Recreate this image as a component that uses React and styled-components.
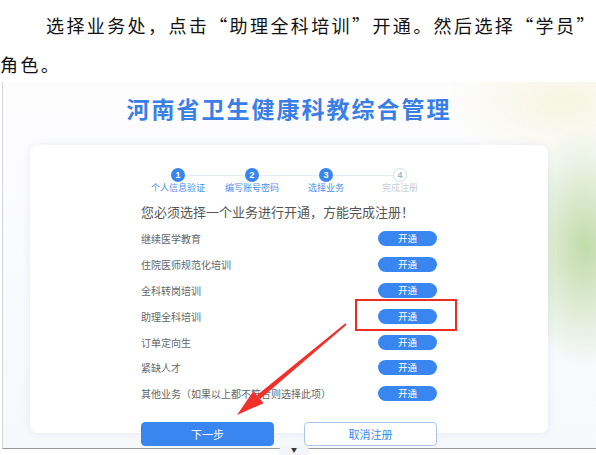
import React from "react";
import styled, { createGlobalStyle } from "styled-components";

const GlobalStyle = createGlobalStyle`
  html, body {
    margin: 0;
    padding: 0;
    background: #ffffff;
  }
  body {
    width: 596px;
    overflow: hidden;
    font-family: "Noto Sans CJK SC", "Noto Sans", sans-serif;
  }
`;

const Page = styled.div`
  width: 596px;
  height: 455px;
  overflow: hidden;
`;

const Paragraph = styled.p`
  margin: 0;
  padding-top: 6px;
  font-size: 18px;
  line-height: 39px;
  letter-spacing: 2.4px;
  color: #111;
  white-space: nowrap;
  text-indent: 46px;
`;

const Frame = styled.div`
  position: relative;
  box-sizing: border-box;
  margin-left: 2px;
  width: 594px;
  height: 367px;
  margin-top: -2px;
  padding-left: 27px;
  border-left: 1px solid #d6d6d6;
  border-bottom: 1.5px solid #9a9a9a;
  background:
    radial-gradient(ellipse 70px 120px at 582px 165px, rgba(190, 218, 165, 0.95), rgba(200, 224, 178, 0) 100%),
    radial-gradient(ellipse 120px 60px at 560px 20px, rgba(246, 244, 222, 0.9), rgba(246, 244, 222, 0) 100%),
    linear-gradient(#fdfdfe, #f6f8fc);
`;

const Column = styled.div`
  width: 518px;
  display: flex;
  flex-direction: column;
`;

const Title = styled.h1`
  margin: 11px 0 0;
  text-align: center;
  font-size: 23px;
  line-height: 30px;
  letter-spacing: 2px;
  font-weight: 700;
  color: #3a7fe6;
`;

const Card = styled.div`
  box-sizing: border-box;
  margin-top: 22px;
  height: 288px;
  padding: 23px 111px 0;
  background: #ffffff;
  border-radius: 8px;
  box-shadow: 0 0 8px rgba(40, 60, 120, 0.08);
`;

const Steps = styled.div`
  display: grid;
  grid-template-columns: repeat(4, 1fr);
  position: relative;
`;

const Step = styled.div`
  position: relative;
  display: flex;
  flex-direction: column;
  align-items: center;

  &::before {
    content: "";
    position: absolute;
    top: 7px;
    left: ${(p) => (p.$first ? "50%" : "0")};
    right: ${(p) => (p.$last ? "50%" : "0")};
    height: 1px;
    background: #e6ecf5;
  }
`;

const Dot = styled.div`
  position: relative;
  z-index: 1;
  box-sizing: border-box;
  width: 14px;
  height: 14px;
  border-radius: 50%;
  display: flex;
  align-items: center;
  justify-content: center;
  font-family: "Liberation Sans", sans-serif;
  font-size: 9px;
  font-weight: 700;
  background: ${(p) => (p.$done ? "#3a86f0" : "#ffffff")};
  color: ${(p) => (p.$done ? "#ffffff" : "#9fb3cf")};
  border: ${(p) => (p.$done ? "none" : "1px solid #cfdcee")};
`;

const StepLabel = styled.div`
  font-size: 9px;
  line-height: 11px;
  white-space: nowrap;
  color: ${(p) => (p.$done ? "#4b8ff0" : "#c9ced8")};
`;

const Heading = styled.div`
  margin-top: 10px;
  font-size: 13px;
  line-height: 18px;
  color: #555;
  white-space: nowrap;
`;

const List = styled.div`
  margin-top: 5px;
  display: flex;
  flex-direction: column;
`;

const Row = styled.div`
  height: 25.8px;
  display: flex;
  align-items: center;
  justify-content: space-between;
`;

const RowLabel = styled.span`
  font-size: 10px;
  color: #666;
  white-space: nowrap;
`;

const OpenWrap = styled.div`
  position: relative;
  display: flex;
`;

const OpenButton = styled.button`
  width: 59px;
  height: 15px;
  padding: 0;
  border: none;
  border-radius: 8px;
  background: #3a86f0;
  color: #fff;
  font-family: inherit;
  font-size: 9.5px;
  line-height: 15px;
`;

const Highlight = styled.div`
  position: absolute;
  top: -10px;
  bottom: -7px;
  left: -23px;
  right: -20px;
  border: 2px solid #ec2d26;
  pointer-events: none;
`;

const Footer = styled.div`
  margin-top: 15px;
  display: flex;
  justify-content: space-between;
`;

const FooterButton = styled.button`
  box-sizing: border-box;
  width: 133px;
  height: 24px;
  padding: 0;
  border-radius: 4px;
  font-family: inherit;
  font-size: 11px;
  border: 1px solid ${(p) => (p.$primary ? "#3a86f0" : "#a9c6f0")};
  background: ${(p) => (p.$primary ? "#3a86f0" : "#ffffff")};
  color: ${(p) => (p.$primary ? "#ffffff" : "#3a86f0")};
`;

const Arrow = styled.svg`
  position: absolute;
  left: 0;
  top: 0;
  width: 594px;
  height: 367px;
  pointer-events: none;
`;

const ScrollTab = styled.div`
  position: absolute;
  left: 276px;
  bottom: -8px;
  width: 30px;
  height: 10px;
  border-radius: 5px 5px 0 0;
  background: #f4f5f8;
  display: flex;
  justify-content: center;
  font-size: 6px;
  line-height: 8px;
  color: #333;
`;

const steps = [
  { n: 1, label: "个人信息验证", done: true },
  { n: 2, label: "编写账号密码", done: true },
  { n: 3, label: "选择业务", done: true },
  { n: 4, label: "完成注册", done: false },
];

const services = [
  "继续医学教育",
  "住院医师规范化培训",
  "全科转岗培训",
  "助理全科培训",
  "订单定向生",
  "紧缺人才",
  "其他业务（如果以上都不符合则选择此项）",
];

export default function App() {
  return (
    <Page>
      <GlobalStyle />
      <Paragraph lang="zh-CN">
        选择业务处，点击“助理全科培训”开通。然后选择“学员”
        <br />
        角色。
      </Paragraph>
      <Frame>
        <Column>
          <Title>河南省卫生健康科教综合管理</Title>
          <Card>
            <Steps>
              {steps.map((s, i) => (
                <Step key={s.n} $first={i === 0} $last={i === steps.length - 1}>
                  <Dot $done={s.done}>{s.n}</Dot>
                  <StepLabel $done={s.done}>{s.label}</StepLabel>
                </Step>
              ))}
            </Steps>
            <Heading>您必须选择一个业务进行开通，方能完成注册！</Heading>
            <List>
              {services.map((name, i) => (
                <Row key={name}>
                  <RowLabel>{name}</RowLabel>
                  <OpenWrap>
                    <OpenButton>开通</OpenButton>
                    {i === 3 && <Highlight />}
                  </OpenWrap>
                </Row>
              ))}
            </List>
            <Footer>
              <FooterButton $primary>下一步</FooterButton>
              <FooterButton>取消注册</FooterButton>
            </Footer>
          </Card>
        </Column>
        <Arrow viewBox="0 0 594 367">
          <polygon
            points="343.6,242.8 342.4,241.2 253.9,313.2 257.1,317.0"
            fill="#f0302a"
          />
          <polygon
            points="234,333 260.6,321.2 250.4,309.0"
            fill="#f0302a"
          />
        </Arrow>
        <ScrollTab>▼</ScrollTab>
      </Frame>
    </Page>
  );
}
